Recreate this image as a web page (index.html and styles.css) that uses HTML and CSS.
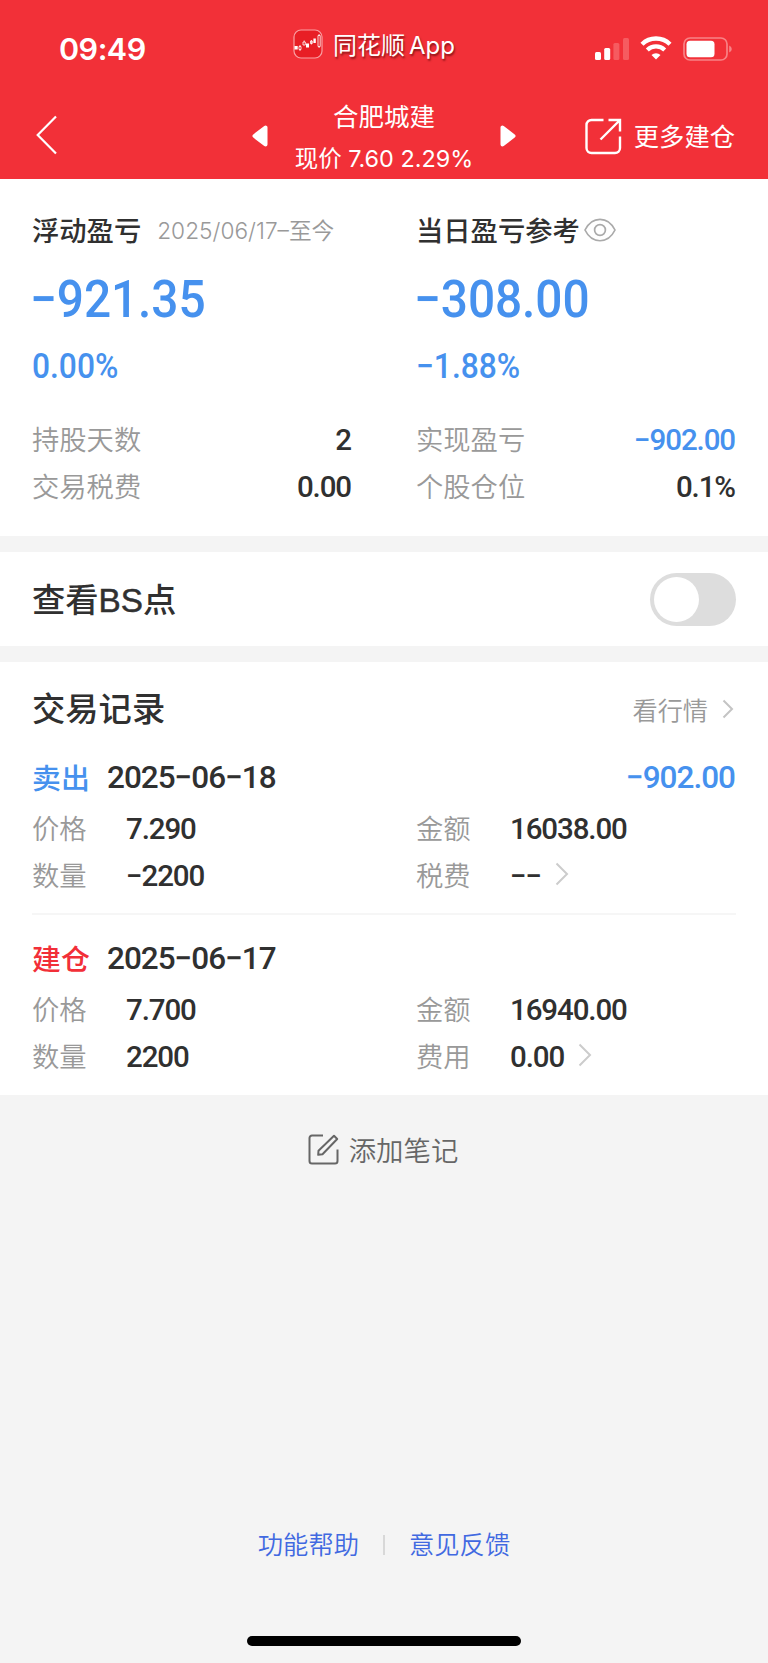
FILE: index.html
```html
<!DOCTYPE html>
<html lang="zh-CN">
<head>
    <meta charset="UTF-8">
    <meta name="viewport" content="width=device-width, initial-scale=1.0">
    <title>合肥城建</title>
    <link rel="stylesheet" href="styles.css">
</head>
<body>
    <header class="header">
        <div class="status-bar">
            <div class="time">09:49</div>
            <div class="app-name">
                <svg class="app-icon" width="30" height="30" viewBox="0 0 30 30">
                    <rect x="1" y="1" width="28" height="28" rx="7" fill="#e81e25" stroke="#f9a0a3" stroke-width="1.2"/>
                    <path d="M1.5 17h3.2v3.5H1.5zM13 14.5h3v4h-3zM20.4 9.5h2.4v4.5h-2.4z" fill="#fff"/>
                    <path d="M6 17.5h2v3H6zM7 16v1.5M7 20.5v1.5M10 13h2.3v3H10zM11.2 11.5v1.5M17.5 12h1.8v2.500h-1.8zM18.4 11v4.5M25 6.5h2.2v11H25zM26.1 5v1.5M26.1 17.5v1.5" fill="none" stroke="#fff" stroke-width=".8"/>
                </svg>
                <span>同花顺<span class="latin">App</span></span>
            </div>
            <div class="status-icons">
                <svg width="34" height="23" viewBox="0 0 34 23">
                    <rect x="0" y="15" width="6" height="8" rx="1.5" fill="#fff"/>
                    <rect x="9.2" y="11" width="6" height="12" rx="1.5" fill="#fff"/>
                    <rect x="18.4" y="6" width="6" height="17" rx="1.5" fill="#f65b60"/>
                    <rect x="28" y="1" width="6" height="22" rx="1.5" fill="#f65b60"/>
                </svg>
                <svg class="wifi" width="32" height="24" viewBox="0 0 32 24">
                    <path d="M2 8.2a20 20 0 0 1 28 0" fill="none" stroke="#fff" stroke-width="4.4"/>
                    <path d="M7.3 13.9a12.5 12.5 0 0 1 17.4 0" fill="none" stroke="#fff" stroke-width="4.2"/>
                    <path d="M11.5 19a6.5 6.5 0 0 1 9 0L16 23.6z" fill="#fff"/>
                </svg>
                <svg class="battery" width="50" height="24" viewBox="0 0 50 24">
                    <rect x="1" y="1" width="43" height="22" rx="6" fill="none" stroke="#f88286" stroke-width="1.7"/>
                    <rect x="3.5" y="3.8" width="28" height="16.4" rx="3.5" fill="#fff"/>
                    <path d="M46.2 8.5q2.6 1 2.6 3.5t-2.6 3.5z" fill="#f88286"/>
                </svg>
            </div>
        </div>
        <div class="nav-bar">
            <svg class="back" width="22" height="40" viewBox="0 0 22 40">
                <path d="M20 1.5L1.7 20L20 38.5" fill="none" stroke="#fff" stroke-width="2.2"/>
            </svg>
            <div class="stock">
                <svg width="16" height="22" viewBox="0 0 16 22">
                    <path d="M13.5 2.5v17L2.5 11z" fill="#fff" stroke="#fff" stroke-width="4" stroke-linejoin="round"/>
                </svg>
                <div class="stock-info">
                    <div class="stock-name">合肥城建</div>
                    <div class="stock-price">现价 7.60 2.29%</div>
                </div>
                <svg width="16" height="22" viewBox="0 0 16 22">
                    <path d="M2.5 2.5v17L13.5 11z" fill="#fff" stroke="#fff" stroke-width="4" stroke-linejoin="round"/>
                </svg>
            </div>
            <div class="more">
                <svg width="37" height="37" viewBox="0 0 37 37" fill="none" stroke="#fff" stroke-width="2.4">
                    <path d="M18.5 2H6.5A5 5 0 0 0 1.5 7v23a5 5 0 0 0 5 5H30a5 5 0 0 0 5-5V18.5"/>
                    <path d="M23.5 2H35v11.5M35 2L15.5 21.5"/>
                </svg>
                <span>更多建仓</span>
            </div>
        </div>
    </header>

    <section class="summary">
        <div class="summary-col">
            <div class="summary-title">浮动盈亏<span class="date-range">2025/06/17–至今</span></div>
            <div class="amount">−921.35</div>
            <div class="percent">0.00%</div>
            <div class="line"><span class="label">持股天数</span><span class="num">2</span></div>
            <div class="line"><span class="label">交易税费</span><span class="num">0.00</span></div>
        </div>
        <div class="summary-col">
            <div class="summary-title">当日盈亏参考
                <svg class="eye" width="32" height="24" viewBox="0 0 32 24" fill="none" stroke="#aaa" stroke-width="1.7">
                    <path d="M1 12C8-2.3 24-2.3 31 12C24 26.3 8 26.3 1 12z"/>
                    <circle cx="16" cy="12" r="5.4"/>
                </svg>
            </div>
            <div class="amount">−308.00</div>
            <div class="percent">−1.88%</div>
            <div class="line"><span class="label">实现盈亏</span><span class="num blue">−902.00</span></div>
            <div class="line"><span class="label">个股仓位</span><span class="num">0.1%</span></div>
        </div>
    </section>

    <section class="bs-point">
        <div class="title">查看<span class="bs">BS</span>点</div>
        <div class="switch"></div>
    </section>

    <section class="records">
        <div class="records-head">
            <div class="title">交易记录</div>
            <div class="quote-link">看行情
                <svg width="12" height="20" viewBox="0 0 12 20">
                    <path d="M1.5 1.5L10 10L1.5 18.5" fill="none" stroke="#c4c4c4" stroke-width="2"/>
                </svg>
            </div>
        </div>

        <div class="record">
            <div class="record-head">
                <span class="action blue">卖出</span>
                <span class="date">2025−06−18</span>
                <span class="profit blue">−902.00</span>
            </div>
            <div class="record-grid">
                <div class="cell"><span class="label">价格</span><span class="num">7.290</span></div>
                <div class="cell"><span class="label">金额</span><span class="num">16038.00</span></div>
                <div class="cell"><span class="label">数量</span><span class="num">−2200</span></div>
                <div class="cell"><span class="label">税费</span><span class="num">−−</span>
                    <svg class="arrow" width="14" height="24" viewBox="0 0 14 24">
                        <path d="M1.5 1.5L12 12L1.5 22.5" fill="none" stroke="#ccc" stroke-width="2"/>
                    </svg>
                </div>
            </div>
        </div>

        <div class="record">
            <div class="record-head">
                <span class="action red">建仓</span>
                <span class="date">2025−06−17</span>
            </div>
            <div class="record-grid">
                <div class="cell"><span class="label">价格</span><span class="num">7.700</span></div>
                <div class="cell"><span class="label">金额</span><span class="num">16940.00</span></div>
                <div class="cell"><span class="label">数量</span><span class="num">2200</span></div>
                <div class="cell"><span class="label">费用</span><span class="num">0.00</span>
                    <svg class="arrow" width="14" height="24" viewBox="0 0 14 24">
                        <path d="M1.5 1.5L12 12L1.5 22.5" fill="none" stroke="#ccc" stroke-width="2"/>
                    </svg>
                </div>
            </div>
        </div>
    </section>

    <div class="add-note">
        <svg width="31" height="31" viewBox="0 0 31 31" fill="none" stroke="#666" stroke-width="2">
            <path d="M15 1.5H4A2.5 2.5 0 0 0 1.5 4v23A2.5 2.5 0 0 0 4 29.5h23a2.5 2.5 0 0 0 2.5-2.5V15.5"/>
            <path d="M26 1.8L29.2 5L14.5 20.3L10.2 20.8L10.5 16.8z" stroke-linejoin="round"/>
        </svg>
        <span>添加笔记</span>
    </div>

    <footer class="footer">
        <div class="links">
            <a>功能帮助</a>
            <i class="split"></i>
            <a>意见反馈</a>
        </div>
        <div class="home-bar"></div>
    </footer>
</body>
</html>
```
FILE: styles.css
```css
* {
    box-sizing: border-box;
}

body {
    margin: 0;
    height: 1663px;
    display: flex;
    flex-direction: column;
    background: #f4f4f4;
    color: #303030;
    font-family: Inter, "Noto Sans CJK SC", sans-serif;
    white-space: nowrap;
}

svg {
    display: block;
    flex: none;
}

.blue {
    color: #4691ee;
}

.red {
    color: #f22f38;
}

/* header */
.header {
    height: 179px;
    background: #f23038;
    color: #fff;
}

.status-bar {
    height: 90px;
    display: grid;
    grid-template-columns: 234px 1fr 173px;
    padding: 0 0 0 59px;
}

.time {
    font-size: 30.5px;
    font-weight: 600;
    line-height: 98px;
    letter-spacing: -0.5px;
}

.app-name {
    display: flex;
    gap: 10px;
    padding-top: 29px;
    font-size: 24px;
    line-height: 33px;
    text-shadow: 1px 2px 2px rgba(70, 0, 0, 0.6);
}

.latin {
    margin-left: 4px;
}

.status-icons {
    display: flex;
    padding-top: 37px;
}

.wifi {
    margin: -1px 0 0 11px;
}

.battery {
    margin-left: 11px;
}

.nav-bar {
    height: 89px;
    display: grid;
    grid-template-columns: 216px 264px 1fr;
    padding: 0 33px 0 36px;
}

.back {
    margin-top: 25px;
}

.stock {
    display: flex;
    justify-content: space-between;
}

.stock svg {
    margin-top: 35px;
}

.stock-info {
    text-align: center;
    padding-top: 8px;
}

.stock-name {
    font-size: 25.5px;
    line-height: 38px;
}

.stock-price {
    font-size: 23.4px;
    line-height: 45px;
}

.more {
    display: flex;
    align-items: flex-start;
    justify-content: flex-end;
    gap: 12px;
    padding-top: 28px;
    font-size: 25.3px;
    line-height: 37px;
}

/* profit summary */
.summary {
    height: 357px;
    display: grid;
    grid-template-columns: 1fr 1fr;
    gap: 64px;
    padding: 30px 32px 0;
    background: #fff;
}

.summary-title {
    display: flex;
    align-items: center;
    height: 40px;
    font-size: 27.3px;
    font-weight: 500;
}

.date-range {
    margin-left: 16px;
    font-size: 22.7px;
    font-weight: 350;
    color: #999;
}

.eye {
    margin: 1px 0 0 4px;
}

.amount,
.percent,
.num,
.date,
.profit {
    font-family: Roboto, sans-serif;
    font-weight: 500;
}

/* condensed digits */
.amount,
.percent {
    transform: scaleX(0.92);
    transform-origin: left;
    color: #4691ee;
}

.amount {
    font-size: 52px;
    line-height: 98px;
    letter-spacing: -0.1px;
    margin: 2px 0 -2px -2px;
}

.percent {
    font-size: 34.5px;
    line-height: 38px;
    letter-spacing: 0;
    margin-bottom: 31px;
}

.line {
    display: flex;
    align-items: center;
    justify-content: space-between;
    height: 47px;
}

.line .num {
    margin-right: 1px;
}

.label {
    padding-bottom: 4px;
    font-size: 27.3px;
    font-weight: 350;
    color: #999;
}

.num {
    font-size: 29.5px;
    letter-spacing: -1.1px;
}

/* BS switch */
.bs-point {
    height: 94px;
    margin-top: 16px;
    padding: 0 32px;
    display: flex;
    align-items: center;
    justify-content: space-between;
    background: #fff;
}

.title {
    padding-bottom: 4px;
    font-size: 33.3px;
    font-weight: 500;
}

.bs {
    font-family: "Liberation Sans", Arial, sans-serif;
    -webkit-text-stroke: 0.5px #303030;
}

.switch {
    width: 86px;
    height: 53px;
    padding: 4px;
    border-radius: 27px;
    background: #ddd;
}

.switch::before {
    content: "";
    display: block;
    width: 45px;
    height: 45px;
    border-radius: 50%;
    background: #fff;
}

/* trade records */
.records {
    height: 433px;
    margin-top: 16px;
    padding: 0 32px;
    background: #fff;
}

.records-head {
    height: 93px;
    display: flex;
    align-items: center;
    justify-content: space-between;
}

.quote-link {
    display: flex;
    align-items: center;
    gap: 14px;
    padding-right: 2px;
    font-size: 25.2px;
    font-weight: 350;
    color: #999;
}

.record {
    height: 158px;
}

.record + .record {
    border-top: 2px solid #f6f6f6;
    padding-top: 21px;
    height: 181px;
}

.record-head {
    display: flex;
    align-items: center;
    height: 44px;
}

.action {
    width: 75px;
    padding-bottom: 3px;
    font-size: 28.9px;
    font-weight: 500;
}

.date,
.profit {
    font-size: 31.5px;
    letter-spacing: -1px;
}

.profit {
    margin-left: auto;
    margin-right: 1px;
}

.record-grid {
    display: grid;
    grid-template-columns: 1fr 1fr;
    grid-auto-rows: 47px;
    column-gap: 64px;
    padding-top: 6px;
}

.cell {
    display: flex;
    align-items: center;
}

.cell .label {
    width: 94px;
}

.arrow {
    margin: 0 0 3px 14px;
}

/* bottom */
.add-note {
    display: flex;
    align-items: center;
    justify-content: center;
    gap: 10px;
    height: 109px;
    padding-right: 2px;
    font-size: 27.4px;
    font-weight: 350;
    color: #666;
}

.add-note span {
    padding-bottom: 2px;
}

.footer {
    margin-top: auto;
    display: flex;
    flex-direction: column;
    align-items: center;
}

.links {
    display: flex;
    align-items: center;
    gap: 24px;
    height: 40px;
    margin-bottom: 71px;
    font-size: 25.3px;
    font-weight: 350;
    color: #4169e1;
}

.links a {
    padding-bottom: 4px;
}

.split {
    width: 2px;
    height: 20px;
    background: #d8d8d8;
}

.home-bar {
    width: 274px;
    height: 10px;
    margin-bottom: 17px;
    border-radius: 5px;
    background: #000;
}
```
